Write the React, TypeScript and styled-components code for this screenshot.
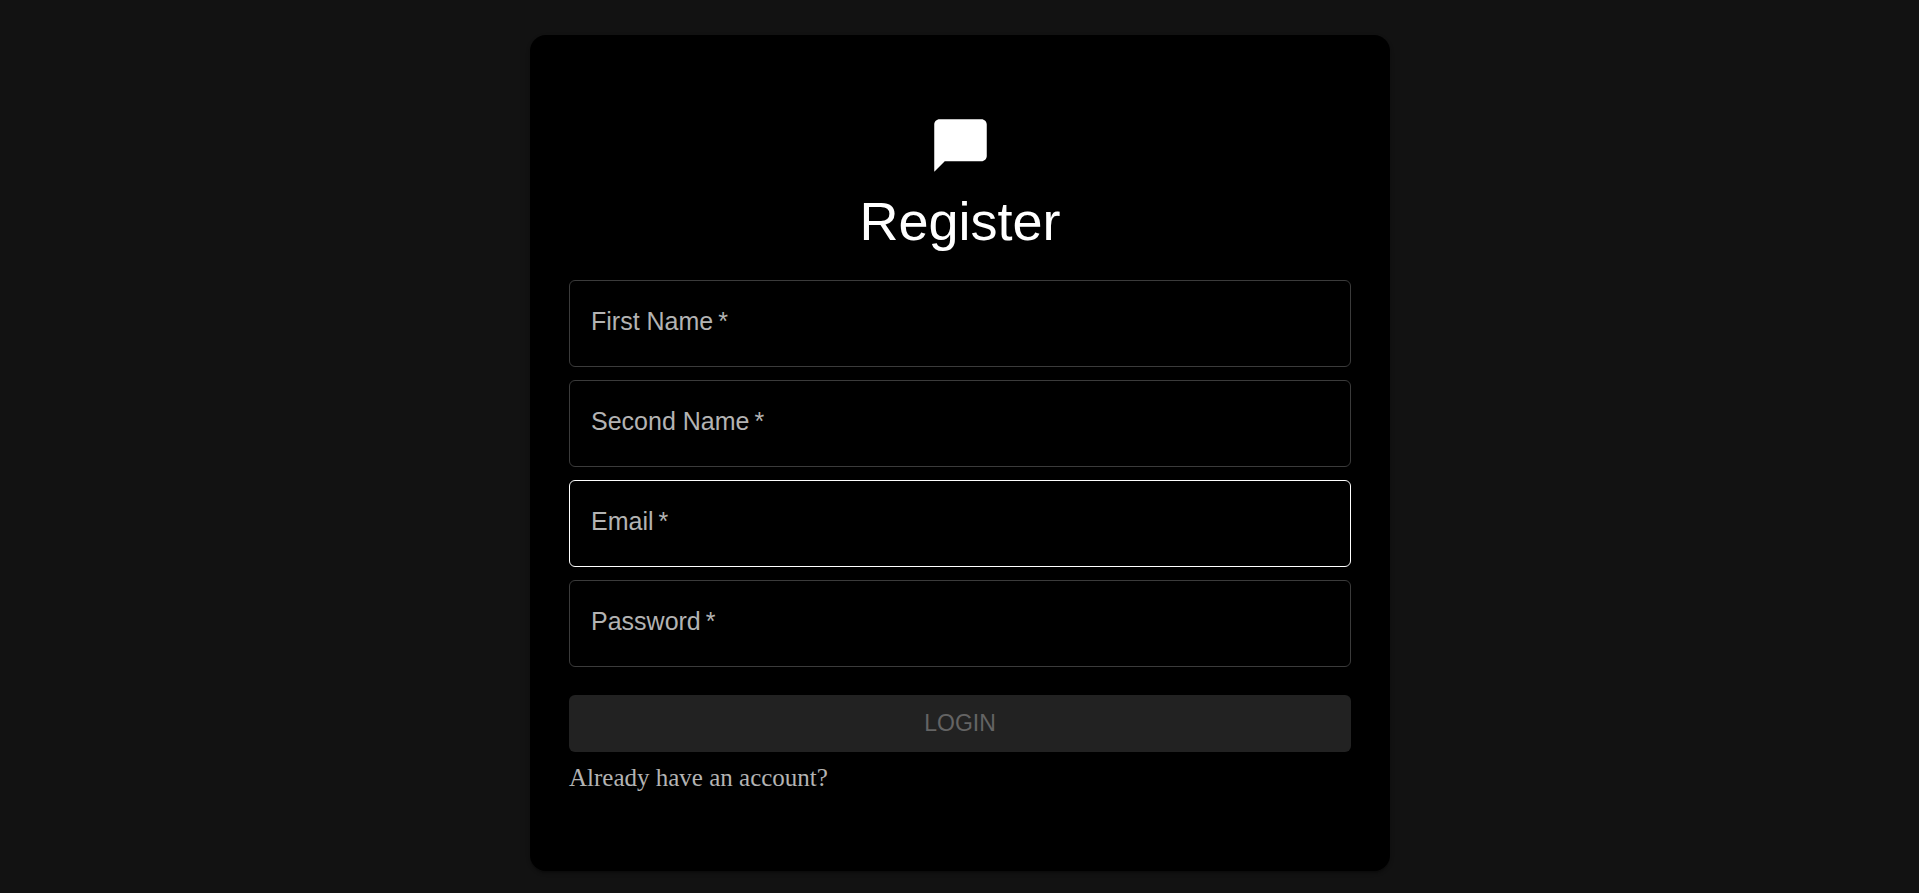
import React from 'react';
import styled, { createGlobalStyle } from 'styled-components';

const GlobalStyle = createGlobalStyle`
  *, *::before, *::after { box-sizing: border-box; }
  body {
    margin: 0;
    background: #121212;
    color: #ffffff;
    font-family: Arial, 'Liberation Sans', sans-serif;
  }
`;

const Page = styled.main`
  display: flex;
  justify-content: center;
  padding: 35px 16px 22px 17px;
`;

const Card = styled.form`
  display: flex;
  flex-direction: column;
  width: 100%;
  max-width: 860px;
  padding: 79px 39px;
  border-radius: 16px;
  background: #000000;
  box-shadow: 0 3px 2px -2px rgba(0, 0, 0, 0.2), 0 2px 2px rgba(0, 0, 0, 0.14),
    0 2px 5px rgba(0, 0, 0, 0.12);
`;

const Header = styled.header`
  display: flex;
  flex-direction: column;
  align-items: center;
  margin-bottom: 25px;
`;

const Logo = styled.svg`
  width: 63px;
  height: 63px;
  fill: #ffffff;
`;

const Title = styled.h1`
  margin: 11px 0 0;
  font-size: 54px;
  font-weight: 400;
  line-height: 67px;
`;

const Fields = styled.div`
  display: flex;
  flex-direction: column;
  gap: 13px;
`;

const FieldBox = styled.div`
  position: relative;
`;

const Label = styled.label`
  position: absolute;
  top: 23px;
  left: 22px;
  color: #b3b3b3;
  font-size: 25px;
  line-height: 36px;
  pointer-events: none;
`;

const Input = styled.input<{ $active?: boolean }>`
  display: block;
  width: 100%;
  height: 87px;
  padding: 0 22px;
  border: 1px solid ${({ $active }) => ($active ? '#ffffff' : '#3b3b3b')};
  border-radius: 6px;
  outline: none;
  background: transparent;
  color: #ffffff;
  font-family: inherit;
  font-size: 25px;

  &:focus,
  &:hover {
    border-color: #ffffff;
  }

  &:not(:placeholder-shown) + ${Label} {
    top: 4px;
    font-size: 16px;
    line-height: 24px;
  }
`;

const SubmitButton = styled.button`
  height: 57px;
  margin-top: 28px;
  padding: 0 0 2px;
  border: 0;
  border-radius: 6px;
  background: #222222;
  color: #646464;
  font-family: inherit;
  font-size: 23px;
  line-height: 38px;
  text-transform: uppercase;
`;

const AccountLink = styled.a`
  align-self: flex-start;
  margin-top: 12px;
  color: #b3b3b3;
  font-family: 'Times New Roman', 'Liberation Serif', serif;
  font-size: 25px;
  line-height: 28px;
  text-decoration: none;
`;

interface FieldProps {
  id: string;
  label: string;
  type?: string;
  active?: boolean;
}

const Field = ({ id, label, type = 'text', active }: FieldProps) => (
  <FieldBox>
    <Input id={id} name={id} type={type} placeholder=" " required $active={active} />
    <Label htmlFor={id}>{label}{'\u2009*'}</Label>
  </FieldBox>
);

export default function App() {
  return (
    <>
      <GlobalStyle />
      <Page>
        <Card>
          <Header>
            <Logo viewBox="0 0 24 24" aria-hidden="true">
              <path d="M20 2H4c-1.1 0-2 .9-2 2v18l4-4h14c1.1 0 2-.9 2-2V4c0-1.1-.9-2-2-2" />
            </Logo>
            <Title>Register</Title>
          </Header>
          <Fields>
            <Field id="firstName" label="First Name" />
            <Field id="secondName" label="Second Name" />
            <Field id="email" label="Email" type="email" active />
            <Field id="password" label="Password" type="password" />
          </Fields>
          <SubmitButton type="submit" disabled>Login</SubmitButton>
          <AccountLink href="#login">Already have an account?</AccountLink>
        </Card>
      </Page>
    </>
  );
}
